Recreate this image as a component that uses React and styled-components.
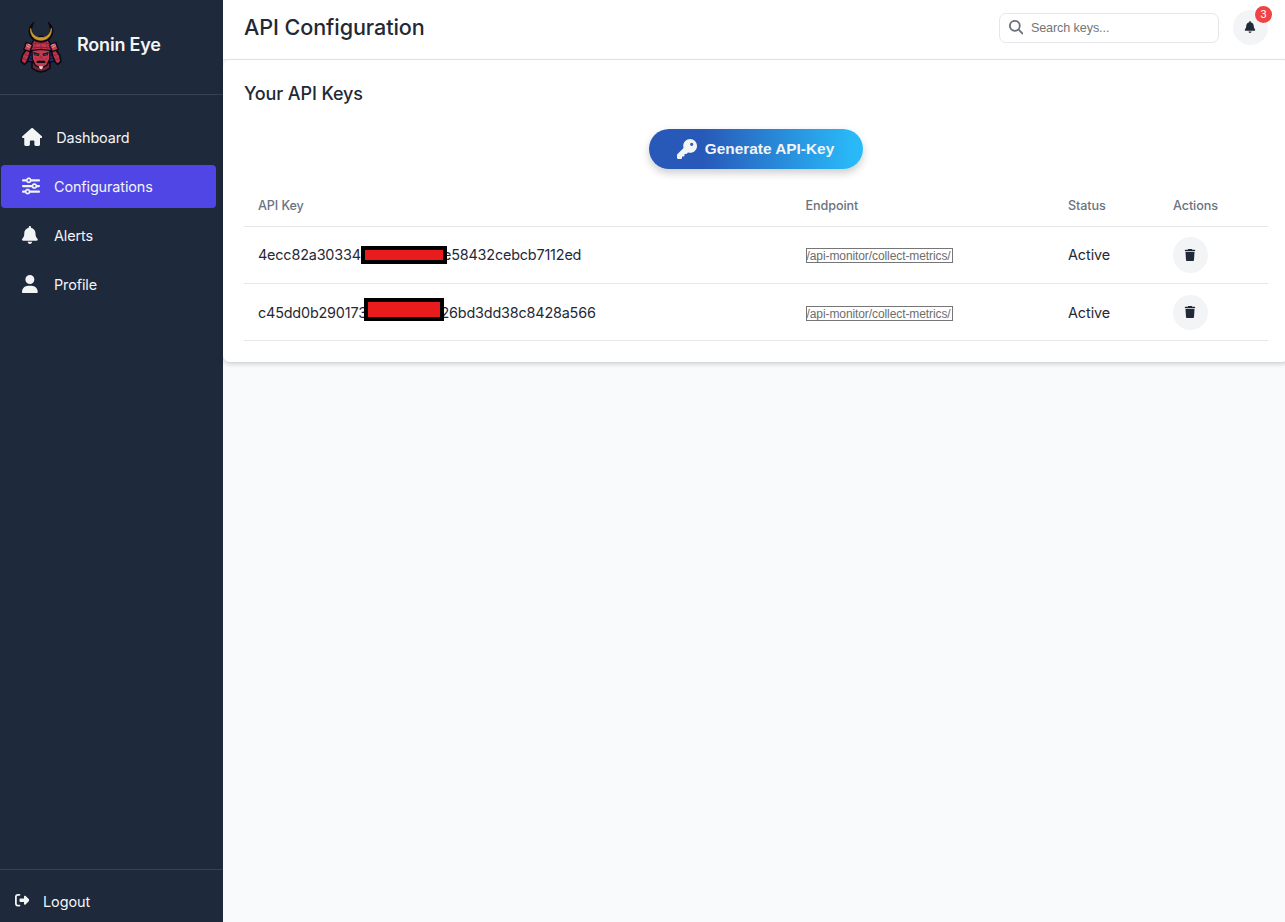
import React from 'react';
import styled, { createGlobalStyle } from 'styled-components';
import {
  FaHouse,
  FaSliders,
  FaBell,
  FaUser,
  FaRightFromBracket,
  FaMagnifyingGlass,
  FaKey,
  FaTrash,
} from 'react-icons/fa6';

const GlobalStyle = createGlobalStyle`
  * { box-sizing: border-box; }
  body {
    margin: 0;
    font-family: Inter, sans-serif;
    font-size: 14.4px;
    color: #1f2937;
    background: #f9fafb;
  }
`;

const Layout = styled.div`
  display: flex;
  height: 922px;
  overflow: hidden;
`;

const Sidebar = styled.aside`
  width: 223px;
  flex: none;
  display: flex;
  flex-direction: column;
  background: #1e293b;
  color: #f3f4f6;
`;

const Brand = styled.div`
  height: 95px;
  padding: 0 20px 1px;
  display: flex;
  align-items: center;
  gap: 15px;
  border-bottom: 1px solid #374151;
`;

const BrandName = styled.span`
  font-size: 18px;
  font-weight: 600;
  line-height: 24px;
  letter-spacing: -0.2px;
  padding-bottom: 4px;
`;

const Nav = styled.nav`
  flex: 1;
  display: flex;
  flex-direction: column;
  gap: 6px;
  padding: 21px 7px 0 1px;
`;

const NavItem = styled.a`
  height: 43px;
  padding-left: 21px;
  display: flex;
  align-items: center;
  gap: 14px;
  letter-spacing: -0.11px;
  border-radius: 4px;
  background: ${(p) => (p.$active ? '#4f46e5' : 'transparent')};
`;

const NavIcon = styled.span`
  display: flex;
  min-width: 18px;
  padding-bottom: 1px;

  svg {
    width: ${(p) => p.$width}px;
    height: 18px;
  }
`;

const Logout = styled.a`
  height: 53px;
  border-top: 1px solid #374151;
  padding: 11px 14.5px 0;
  display: flex;
  align-items: center;
  gap: 14px;

  svg { margin-bottom: 2px; }
`;

const Main = styled.main`
  flex: 1;
  min-width: 0;
`;

const Header = styled.header`
  height: 60px;
  padding: 0 17px 5px 21px;
  display: flex;
  align-items: center;
  background: #fff;
  border-bottom: 1px solid #e5e7eb;
`;

const Title = styled.h1`
  margin: 0;
  flex: 1;
  font-size: 21.6px;
  font-weight: 500;
  letter-spacing: -0.08px;
`;

const Search = styled.label`
  width: 220px;
  height: 30px;
  margin: 1px 14px 0 0;
  padding: 0 9px;
  display: flex;
  align-items: center;
  gap: 7.5px;
  border: 1px solid #e5e7eb;
  border-radius: 7px;
  color: #6b7280;
  font-size: 14.4px;
`;

const SearchInput = styled.input`
  min-width: 0;
  flex: 1;
  padding: 0;
  border: 0;
  outline: 0;
  background: none;
  font: 12.6px 'Liberation Sans', Arial, sans-serif;

  &::placeholder {
    color: #757575;
    opacity: 1;
    letter-spacing: -0.1px;
  }
`;

const RoundButton = styled.button`
  position: relative;
  width: 35px;
  height: ${(p) => p.$height || 35}px;
  padding: 0 1px 0 0;
  display: flex;
  align-items: center;
  justify-content: center;
  border: 0;
  border-radius: 50%;
  background: #f3f4f6;
  color: #1f2937;
  font-size: 12px;
`;

const Badge = styled.span`
  position: absolute;
  top: -4px;
  right: -4px;
  width: 17px;
  height: 17px;
  border-radius: 50%;
  background: #ef4444;
  color: #fff;
  font: 10.8px/17px 'Liberation Sans', Arial, sans-serif;
  text-align: center;
`;

const Panel = styled.section`
  height: 302px;
  margin-right: -4px;
  padding: 22px 21px 0 21px;
  background: #fff;
  border-radius: 7px;
  box-shadow: 0 2px 5px rgba(0, 0, 0, 0.18);
`;

const PanelTitle = styled.h2`
  margin: 0 0 23px;
  font-size: 18px;
  line-height: 24px;
  font-weight: 500;
  letter-spacing: -0.11px;
`;

const GenerateButton = styled.button`
  width: 214px;
  height: 40px;
  margin: 0 auto 16px;
  padding: 0 1px 0 0;
  display: flex;
  align-items: center;
  justify-content: center;
  gap: 8px;
  border: 0;
  border-radius: 20px;
  background: linear-gradient(90deg, #2859b8 25%, #29b9f8 95%);
  box-shadow: 0 4px 9px rgba(0, 0, 0, 0.2);
  color: #f3f4f6;
  font: bold 15.4px 'Liberation Sans', Arial, sans-serif;

  svg { font-size: 20px; }
`;

const Row = styled.div`
  height: ${(p) => (p.$head ? 42 : 57)}px;
  display: grid;
  grid-template-columns: 547.5px 262.5px 105px 1fr;
  align-items: center;
  padding-left: 14px;
  border-bottom: 1px solid #e5e7eb;
`;

const HeadCell = styled.span`
  font-size: 12.6px;
  font-weight: 500;
  letter-spacing: -0.09px;
  color: #6b7280;
`;

const Status = styled.span`
  padding-bottom: ${(p) => p.$lift}px;
  letter-spacing: -0.06px;
`;

const KeyValue = styled.div`
  position: relative;
  display: flex;
  align-items: center;
  letter-spacing: -0.18px;
  padding-bottom: ${(p) => p.$lift}px;
`;

const KeyStart = styled.span`
  flex: none;
  width: ${(p) => p.$width}px;
`;

const Redaction = styled.span`
  position: absolute;
  left: ${(p) => p.$left}px;
  top: ${(p) => p.$top}px;
  width: ${(p) => p.$width}px;
  height: ${(p) => p.$height}px;
  border: 4px solid #000;
  background: #e81c1c;
`;

const Endpoint = styled.span`
  justify-self: start;
  width: 147px;
  height: 15px;
  margin: 2px 0 ${(p) => p.$lift}px;
  border: 1px solid #767676;
  color: #6d6d6d;
  font: 12px/14px 'Liberation Sans', Arial, sans-serif;
  letter-spacing: -0.09px;
  white-space: nowrap;
`;

function SamuraiLogo() {
  return (
    <svg width="42" height="52" viewBox="30 27 126 156" strokeLinejoin="round">
      {/* neck guard lining */}
      <path d="M50 118h86l6 28-22 4H66l-22-4z" fill="#252f78" stroke="#0a0b14" strokeWidth="4" />
      <path d="M52 131h16M50 140h18M118 131h16M118 140h18" stroke="#11183f" strokeWidth="3" />
      {/* shoulder plates */}
      <path d="M50 111l13 3-6 21-7 16-7 6-10-9 4-18z" fill="#b93449" stroke="#0a0b14" strokeWidth="5" />
      <path d="M136 111l-13 3 6 21 7 16 7 6 10-9-4-18z" fill="#b93449" stroke="#0a0b14" strokeWidth="5" />
      <path d="M44 126l12 6M39 139l12 5M142 126l-12 6M147 139l-12 5" stroke="#7a1d34" strokeWidth="2" />
      {/* throat guard */}
      <path d="M66 152h54v16l-12 8-15 4-15-4-12-8z" fill="#6d2434" stroke="#0a0b14" strokeWidth="5" />
      {/* face mask */}
      <path d="M66 112h54l-1 30-9 18-17 8-17-8-9-18z" fill="#c93a4e" stroke="#14091a" strokeWidth="4" />
      <path d="M69 119l20 6-3 8-13-3zM117 119l-20 6 3 8 13-3z" fill="#171b2c" />
      <path d="M76 127l7 2M110 127l-7 2" stroke="#506b85" strokeWidth="2" />
      <path d="M90 131l-4 10h14l-4-10" fill="#b22e44" />
      <path d="M75 137l7 7M111 137l-7 7" stroke="#7b1b32" strokeWidth="2" />
      <path d="M78 150q5-5 15-4 10-1 15 4l-5 3H83z" fill="#120910" />
      <path d="M86 163h14l-4 8h-6z" fill="#ead4d2" />
      {/* helmet bowl */}
      <path d="M76 80l10-2 2-5h10l2 5 10 2 12 16 4 20-33-4-33 4 4-20z" fill="#c13950" stroke="#0a0b14" strokeWidth="4" />
      <path d="M67 95q26-5 52 0M64 108q29-5 58 0" fill="none" stroke="#5b1729" strokeWidth="2" />
      <path d="M79 84l-5 26M93 90v22M107 84l5 26" stroke="#81203a" strokeWidth="2" />
      {/* turned-back side flaps */}
      <path d="M48 91l20 8-9 20-18-7 4-9z" fill="#c93e52" stroke="#0a0b14" strokeWidth="4" />
      <path d="M138 91l-20 8 9 20 18-7-4-9z" fill="#c93e52" stroke="#0a0b14" strokeWidth="4" />
      <path d="M49 101l10 5M53 96l9 4M137 101l-10 5M133 96l-9 4" stroke="#efadb1" strokeWidth="3" />
      {/* crescent crest */}
      <path d="M72 30C54 43 53 66 66 80c14 14 40 14 54 0 13-14 12-37-6-50 9 18 9 31 1 40-11 12-33 12-44 0-8-9-8-22 1-40z" fill="#0c0a10" stroke="#0c0a10" strokeWidth="3" />
      <path d="M62 49c-2 15 5 27 15 32 10 5 22 5 32 0 10-5 17-17 15-32-2 13-8 21-16 25-9 4-21 4-30 0-8-4-14-12-16-25z" fill="#d29a2c" stroke="#d29a2c" strokeWidth="2" />
    </svg>
  );
}

const navItems = [
  { label: 'Dashboard', Icon: FaHouse, width: 20.25 },
  { label: 'Configurations', Icon: FaSliders, width: 18, active: true },
  { label: 'Alerts', Icon: FaBell, width: 15.75 },
  { label: 'Profile', Icon: FaUser, width: 15.75 },
];

const apiKeys = [
  { start: '4ecc82a303341', end: 'e58432cebcb7112ed', offset: 185, lift: 1, size: 36, bar: { left: 103, top: 0, width: 86, height: 18 } },
  { start: 'c45dd0b290173', end: '26bd3dd38c8428a566', offset: 182.5, lift: 0, size: 35, bar: { left: 106, top: -6, width: 80, height: 23 } },
];

export default function App() {
  return (
    <Layout>
      <GlobalStyle />
      <Sidebar>
        <Brand>
          <SamuraiLogo />
          <BrandName>Ronin Eye</BrandName>
        </Brand>
        <Nav>
          {navItems.map(({ label, Icon, width, active }) => (
            <NavItem key={label} $active={active}>
              <NavIcon $width={width}><Icon /></NavIcon>
              {label}
            </NavItem>
          ))}
        </Nav>
        <Logout><FaRightFromBracket />Logout</Logout>
      </Sidebar>
      <Main>
        <Header>
          <Title>API Configuration</Title>
          <Search>
            <FaMagnifyingGlass />
            <SearchInput placeholder="Search keys..." />
          </Search>
          <RoundButton aria-label="Notifications">
            <FaBell />
            <Badge>3</Badge>
          </RoundButton>
        </Header>
        <Panel>
          <PanelTitle>Your API Keys</PanelTitle>
          <GenerateButton><FaKey />Generate API-Key</GenerateButton>
          <Row $head>
            <HeadCell>API Key</HeadCell>
            <HeadCell>Endpoint</HeadCell>
            <HeadCell>Status</HeadCell>
            <HeadCell>Actions</HeadCell>
          </Row>
          {apiKeys.map(({ start, end, offset, lift, size, bar }) => (
            <Row key={start}>
              <KeyValue $lift={lift}>
                <KeyStart $width={offset}>{start}</KeyStart>
                <span>{end}</span>
                <Redaction $left={bar.left} $top={bar.top} $width={bar.width} $height={bar.height} />
              </KeyValue>
              <Endpoint $lift={lift}>/api-monitor/collect-metrics/</Endpoint>
              <Status $lift={lift}>Active</Status>
              <RoundButton aria-label="Delete key" $height={size}><FaTrash /></RoundButton>
            </Row>
          ))}
        </Panel>
      </Main>
    </Layout>
  );
}
